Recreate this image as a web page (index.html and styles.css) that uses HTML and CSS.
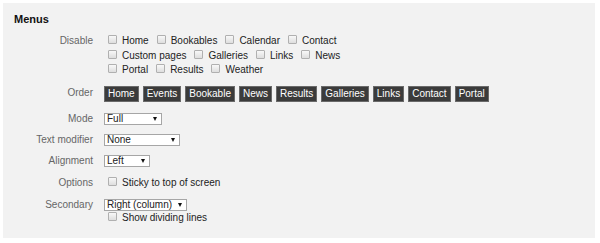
FILE: index.html
```html
<!DOCTYPE html>
<html lang="en">
<head>
  <meta charset="UTF-8">
  <title>Menus</title>
  <link rel="stylesheet" href="styles.css">
</head>
<body>
  <div class="panel">
    <h2>Menus</h2>

    <div class="rows">
      <div class="row">
        <span class="label">Disable</span>
        <div class="checks">
          <label class="check"><input type="checkbox">Home</label>
          <label class="check"><input type="checkbox">Bookables</label>
          <label class="check"><input type="checkbox">Calendar</label>
          <label class="check"><input type="checkbox">Contact</label>
          <label class="check"><input type="checkbox">Custom pages</label>
          <label class="check"><input type="checkbox">Galleries</label>
          <label class="check"><input type="checkbox">Links</label>
          <label class="check"><input type="checkbox">News</label>
          <label class="check"><input type="checkbox">Portal</label>
          <label class="check"><input type="checkbox">Results</label>
          <label class="check"><input type="checkbox">Weather</label>
        </div>
      </div>

      <div class="row order">
        <span class="label">Order</span>
        <div class="order-list">
          <span class="item">Home</span>
          <span class="item">Events</span>
          <span class="item">Bookable</span>
          <span class="item">News</span>
          <span class="item">Results</span>
          <span class="item">Galleries</span>
          <span class="item">Links</span>
          <span class="item">Contact</span>
          <span class="item">Portal</span>
        </div>
      </div>

      <div class="row sel">
        <span class="label">Mode</span>
        <span class="select w-mode"><select><option>Full</option></select></span>
      </div>

      <div class="row sel">
        <span class="label">Text modifier</span>
        <span class="select w-text"><select><option>None</option></select></span>
      </div>

      <div class="row sel">
        <span class="label">Alignment</span>
        <span class="select w-align"><select><option>Left</option></select></span>
      </div>

      <div class="row options">
        <span class="label">Options</span>
        <div class="checks">
          <label class="check"><input type="checkbox">Sticky to top of screen</label>
        </div>
      </div>

      <div class="row">
        <span class="label sel-label">Secondary</span>
        <div class="stack">
          <span class="select w-second"><select><option>Right (column)</option></select></span>
          <label class="check"><input type="checkbox">Show dividing lines</label>
        </div>
      </div>
    </div>
  </div>
</body>
</html>
```

FILE: styles.css
```css
body {
  margin: 0;
  padding: 3px;
  background-color: #fff;
  font-family: "Liberation Sans", Arial, sans-serif;
}

.panel {
  width: 592px;
  height: 235px;
  box-sizing: border-box;
  padding: 9px 11px;
  background-color: #f2f2f2;
  font-size: 10px;
  color: #222;
}

h2 {
  margin: 0 0 8px;
  font-size: 11px;
  line-height: 14px;
  color: #111;
}

.rows {
  display: flex;
  flex-direction: column;
  gap: 9px;
}

.row {
  display: flex;
  align-items: flex-start;
  gap: 11px;
}

.label {
  width: 79px;
  flex-shrink: 0;
  text-align: right;
  color: #666;
  line-height: 14.5px;
}

.checks {
  width: 260px;
  display: flex;
  flex-wrap: wrap;
  column-gap: 4px;
}

.check {
  display: inline-flex;
  align-items: center;
  line-height: 14.5px;
  color: #222;
}

.check input {
  appearance: none;
  width: 9px;
  height: 9px;
  margin: 0 5px 3px 4px;
  border: 1px solid #b0b0b0;
  border-radius: 1px;
  background: linear-gradient(#f8f8f8, #dedede);
}

.row.order {
  align-items: center;
  margin-top: -1px;
  margin-bottom: 2px;
}

.order-list {
  display: flex;
  gap: 4px;
}

.item {
  padding: 0 3px;
  line-height: 14px;
  border: 1px solid #6a6a6a;
  background-color: #3b3b3b;
  color: #fff;
}

.row.sel {
  align-items: center;
}

.row.sel .label,
.sel-label {
  line-height: 12px;
}

.select {
  position: relative;
  display: inline-block;
}

.select select {
  appearance: none;
  display: block;
  width: 100%;
  height: 12px;
  box-sizing: border-box;
  margin: 0;
  padding: 0 2px;
  border: 1px solid #a6a6a6;
  border-radius: 0;
  background-color: #fff;
  font-family: inherit;
  font-size: 10px;
  line-height: 10px;
  color: #222;
}

.select::after {
  content: "";
  position: absolute;
  right: 5px;
  top: 4px;
  border-left: 2.5px solid transparent;
  border-right: 2.5px solid transparent;
  border-top: 4px solid #111;
}

.w-mode { width: 58px; }
.w-text { width: 76px; }
.w-align { width: 46px; }
.w-second { width: 83px; }

.stack {
  display: flex;
  flex-direction: column;
  align-items: flex-start;
}
```
